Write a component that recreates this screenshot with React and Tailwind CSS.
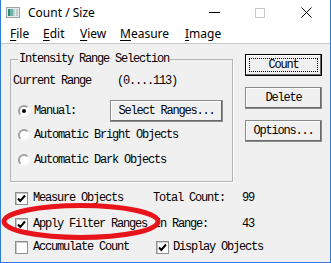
import React from 'react';

const mono = { fontFamily: '"Liberation Mono", monospace' };

function Check({ checked }) {
  return (
    <span className="w-[13px] h-[13px] bg-white border border-[#8f8f8f] shadow-[inset_1px_1px_0_#c8c8c8] flex items-center justify-center shrink-0">
      {checked && (
        <svg width="9" height="9" viewBox="0 0 9 9">
          <path d="M1 4.5 L3.3 7 L8 1.5" fill="none" stroke="#000" strokeWidth="2" />
        </svg>
      )}
    </span>
  );
}

function Radio({ checked }) {
  return (
    <span className="w-[12px] h-[12px] rounded-full bg-white border-2 border-t-[#a0a0a0] border-l-[#a0a0a0] border-b-[#f8f8f8] border-r-[#f8f8f8] flex items-center justify-center shrink-0">
      {checked && <span className="w-[4px] h-[4px] rounded-full bg-black" />}
    </span>
  );
}

function Btn({ children, isDefault, className = '' }) {
  return (
    <button
      className={`h-[22px] bg-[#f0f0f0] flex items-center justify-center text-[12px] tracking-[-1.2px] text-black ${
        isDefault
          ? 'border border-black shadow-[inset_-1px_-1px_0_#696969,inset_1px_1px_0_#fff]'
          : 'border border-[#8a8a8a] shadow-[inset_-1px_-1px_0_#696969,inset_1px_1px_0_#fff]'
      } ${className}`}
      style={mono}
    >
      {isDefault ? (
        <span className="w-[calc(100%-6px)] h-[calc(100%-6px)] border border-dotted border-black flex items-center justify-center leading-[12px]">
          {children}
        </span>
      ) : (
        children
      )}
    </button>
  );
}

function U({ children }) {
  return <span className="underline underline-offset-2">{children}</span>;
}

export default function App() {
  return (
    <div className="relative w-[331px] h-[263px] flex flex-col bg-[#f0f0f0] border border-t-0 border-[#2f7bd6] overflow-hidden">
      {/* Title bar */}
      <div
        className="h-[25px] bg-white flex items-center text-[12px] text-black"
        style={{ fontFamily: '"Noto Sans", sans-serif' }}
      >
        <svg className="ml-[5px]" width="14" height="11" viewBox="0 0 14 11">
          <rect x="0.5" y="0.5" width="13" height="10" fill="#e8ecec" stroke="#9aa4a4" />
          <rect x="2" y="2" width="2" height="7" fill="#2f8a7a" />
          <rect x="4" y="2" width="3" height="7" fill="#6fb0a8" />
          <rect x="7" y="2" width="2" height="7" fill="#b8d0cc" />
          <rect x="10" y="2" width="2" height="7" fill="#c8c8c8" />
        </svg>
        <span className="ml-[8px]">Count / Size</span>
        <div className="flex-1" />
        <span className="w-[11px] h-[1px] bg-black mr-[35px]" />
        <span className="w-[10px] h-[10px] border border-[#c6c6c6] mr-[36px]" />
        <svg className="mr-[18px]" width="11" height="11" viewBox="0 0 11 11">
          <path d="M0.5 0.5 L10.5 10.5 M10.5 0.5 L0.5 10.5" stroke="#000" strokeWidth="1" />
        </svg>
      </div>

      {/* Menu bar */}
      <div
        className="h-[19px] bg-white border-b border-[#c8c8c8] flex items-center text-[12px] text-black pl-[9px]"
        style={{ fontFamily: '"Noto Sans", sans-serif' }}
      >
        <span className="w-[33px]"><U>F</U>ile</span>
        <span className="w-[37px]"><U>E</U>dit</span>
        <span className="w-[40px]"><U>V</U>iew</span>
        <span className="w-[65px]"><U>M</U>easure</span>
        <span><U>I</U>mage</span>
      </div>

      {/* Client */}
      <div className="flex-1 pl-[9px] pt-[9px] text-[12px] tracking-[-1.2px] text-black leading-[14px]" style={mono}>
        <div className="flex">
          <fieldset className="w-[223px] border border-[#b4b4b4] shadow-[1px_1px_0_#fff] pl-[2px] pb-[14px]">
            <legend className="ml-[5px] px-[1px] leading-[12px]">Intensity Range Selection</legend>
            <div className="h-[14px] mt-[9px] flex items-center">
              <span className="w-[104px]">Current Range</span>
              <span>(0....113)</span>
            </div>
            <div className="h-[22px] mt-[12px] flex items-center pl-[5px]">
              <Radio checked />
              <span className="ml-[4px] w-[76px]">Manual:</span>
              <Btn className="w-[113px]">Select Ranges...</Btn>
            </div>
            <div className="h-[14px] mt-[6px] flex items-center pl-[5px]">
              <Radio />
              <span className="ml-[4px]">Automatic Bright Objects</span>
            </div>
            <div className="h-[14px] mt-[11px] flex items-center pl-[5px]">
              <Radio />
              <span className="ml-[4px]">Automatic Dark Objects</span>
            </div>
          </fieldset>

          <div className="ml-[12px] mt-[1px] flex flex-col gap-[11px]">
            <Btn isDefault className="w-[77px]">Count</Btn>
            <Btn className="w-[77px]">Delete</Btn>
            <Btn className="w-[77px]">Options...</Btn>
          </div>
        </div>

        <div className="flex flex-col pl-[5px] mt-[9px]">
          <div className="h-[14px] flex items-center">
            <div className="w-[138px] flex items-center">
              <Check checked />
              <span className="ml-[5px]">Measure Objects</span>
            </div>
            <span className="w-[89px]">Total Count:</span>
            <span>99</span>
          </div>
          <div className="h-[14px] mt-[12px] flex items-center">
            <div className="w-[139px] flex items-center">
              <Check checked />
              <span className="ml-[5px]">Apply Filter Ranges</span>
            </div>
            <span className="w-[88px]">In Range:</span>
            <span>43</span>
          </div>
          <div className="h-[14px] mt-[9px] flex items-center">
            <div className="w-[141px] flex items-center">
              <Check />
              <span className="ml-[5px]">Accumulate Count</span>
            </div>
            <Check checked />
            <span className="ml-[4px]">Display Objects</span>
          </div>
        </div>
      </div>

      {/* red annotation ellipse */}
      <svg className="absolute left-0 top-[202px] pointer-events-none" width="165" height="42" viewBox="0 0 165 42">
        <ellipse cx="80" cy="19.5" rx="77" ry="16" fill="none" stroke="#e8141c" strokeWidth="5" />
      </svg>
    </div>
  );
}
